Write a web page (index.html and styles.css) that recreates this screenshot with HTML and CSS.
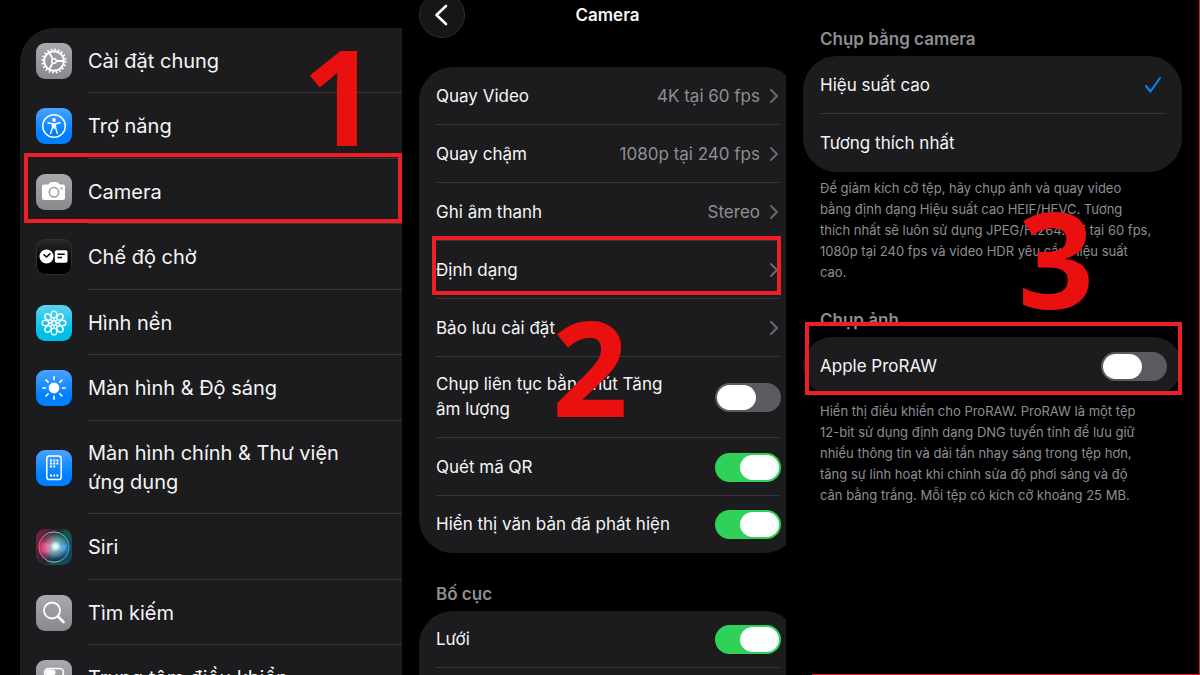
FILE: index.html
```html
<!DOCTYPE html>
<html lang="vi">
<head>
<meta charset="utf-8">
<meta name="viewport" content="width=device-width, initial-scale=1">
<title>Camera</title>
<link rel="stylesheet" href="styles.css">
</head>
<body>
<main class="steps">
  <section class="step step-menu">
    <ul class="menu">
      <li><a class="menu-row" href="#general">
        <svg class="tile gray" viewBox="0 0 36 36" aria-hidden="true">
          <g fill="none" stroke="#fff">
            <circle cx="18" cy="18" r="9.8" stroke-width="1.9"/>
            <circle cx="18" cy="18" r="11.6" stroke-width="2" stroke-dasharray="1.65 1.994"/>
            <circle cx="18" cy="18" r="2.3" stroke-width="1.5"/>
            <path d="M20.300 18H27.500M16.850 16L13.200 9.700M16.850 20L13.200 26.300" stroke-width="1.8"/>
          </g>
        </svg>
        <span>Cài đặt chung</span></a></li>
      <li><a class="menu-row" href="#accessibility">
        <svg class="tile blue" viewBox="0 0 36 36" aria-hidden="true">
          <circle cx="18" cy="18" r="11.300" fill="none" stroke="#fff" stroke-width="1.5"/>
          <circle cx="18" cy="12" r="1.900" fill="#fff"/>
          <path d="M12 14.800L16.500 15.900V19.500L14.600 25.500M24 14.800L19.500 15.900V19.500L21.400 25.500" fill="none" stroke="#fff" stroke-width="1.400" stroke-linecap="round" stroke-linejoin="round"/>
          <path d="M16 15.200H20V20.500H16Z" fill="#fff"/>
        </svg>
        <span>Trợ năng</span></a></li>
      <li class="marked"><a class="menu-row" href="#camera">
        <svg class="tile gray" viewBox="0 0 36 36" aria-hidden="true">
          <path d="M8 10.500H12.200L14 8.600Q14.500 8 15.500 8H20.500Q21.500 8 22 8.600L23.800 10.500H27Q29 10.500 29 12.500V24Q29 26 27 26H8Q6 26 6 24V12.500Q6 10.500 8 10.500Z" fill="#fff"/>
          <circle cx="18" cy="18.300" r="4.700" fill="none" stroke="#98989d" stroke-width="1.500"/>
          <circle cx="25.600" cy="14.400" r="1.100" fill="#98989d"/>
        </svg>
        <span>Camera</span></a></li>
      <li><a class="menu-row" href="#standby">
        <svg class="tile black" viewBox="0 0 36 36" aria-hidden="true">
          <circle cx="10.500" cy="17.500" r="7" fill="#fff"/>
          <path d="M7.500 15.300L10.500 18L14.500 14.300" fill="none" stroke="#000" stroke-width="1.500"/>
          <rect x="18.800" y="11.300" width="12.700" height="12.400" rx="1.800" fill="#fff"/>
          <path d="M21.500 15.200H28.700M21.500 18.500H26" stroke="#000" stroke-width="1.400"/>
        </svg>
        <span>Chế độ chờ</span></a></li>
      <li><a class="menu-row" href="#wallpaper">
        <svg class="tile cyan" viewBox="0 0 36 36" aria-hidden="true">
          <g fill="none" stroke="#fff" stroke-width="1.400">
            <ellipse cx="18" cy="9.500" rx="2.800" ry="3.400"/>
            <ellipse cx="18" cy="9.500" rx="2.800" ry="3.400" transform="rotate(45 18 18)"/>
            <ellipse cx="18" cy="9.500" rx="2.800" ry="3.400" transform="rotate(90 18 18)"/>
            <ellipse cx="18" cy="9.500" rx="2.800" ry="3.400" transform="rotate(135 18 18)"/>
            <ellipse cx="18" cy="9.500" rx="2.800" ry="3.400" transform="rotate(180 18 18)"/>
            <ellipse cx="18" cy="9.500" rx="2.800" ry="3.400" transform="rotate(225 18 18)"/>
            <ellipse cx="18" cy="9.500" rx="2.800" ry="3.400" transform="rotate(270 18 18)"/>
            <ellipse cx="18" cy="9.500" rx="2.800" ry="3.400" transform="rotate(315 18 18)"/>
            <circle cx="18" cy="18" r="2.200"/>
            <path d="M18 13V15.800M18 20.200V23M13 18H15.800M20.200 18H23M14.500 14.500L16.400 16.400M19.600 19.600L21.500 21.500M21.500 14.500L19.600 16.400M16.400 19.600L14.500 21.500"/>
          </g>
        </svg>
        <span>Hình nền</span></a></li>
      <li><a class="menu-row" href="#display">
        <svg class="tile blue" viewBox="0 0 36 36" aria-hidden="true">
          <circle cx="18" cy="18" r="5.400" fill="#fff"/>
          <path d="M18 6.800V9.600M18 26.400V29.200M6.800 18H9.600M26.400 18H29.200M10.100 10.100L12.100 12.100M23.900 23.900L25.900 25.900M25.900 10.100L23.900 12.100M12.100 23.900L10.100 25.900" stroke="#fff" stroke-width="1.600" stroke-linecap="round"/>
        </svg>
        <span>Màn hình &amp; Độ sáng</span></a></li>
      <li><a class="menu-row" href="#home">
        <svg class="tile blue" viewBox="0 0 36 36" aria-hidden="true">
          <rect x="10.800" y="6" width="14.400" height="23.600" rx="2.600" fill="none" stroke="#fff" stroke-width="1.500"/>
          <path d="M14 10.500H22.500M14 13.500H22.500M14 16.500H19.500M14 25.500H22.500" stroke="#fff" stroke-width="2" stroke-dasharray="2 1.200"/>
        </svg>
        <span>Màn hình chính &amp; Thư viện ứng dụng</span></a></li>
      <li><a class="menu-row" href="#siri">
        <svg class="tile siri" viewBox="0 0 36 36" aria-hidden="true">
          <defs>
            <radialGradient id="glow" cx="0.550" cy="0.480" r="0.400">
              <stop offset="0" stop-color="#fff"/>
              <stop offset="0.200" stop-color="#e2faff" stop-opacity="0.900"/>
              <stop offset="0.500" stop-color="#b6dce8" stop-opacity="0.350"/>
              <stop offset="1" stop-color="#fff" stop-opacity="0"/>
            </radialGradient>
            <linearGradient id="orb" x1="0" y1="0.300" x2="1" y2="0.600">
              <stop offset="0" stop-color="#b8285e"/>
              <stop offset="0.300" stop-color="#d84b7d"/>
              <stop offset="0.550" stop-color="#53a7a6"/>
              <stop offset="1" stop-color="#1769a8"/>
            </linearGradient>
            <linearGradient id="shade" x1="0" y1="0" x2="0" y2="1">
              <stop offset="0" stop-color="#12372f" stop-opacity="0.850"/>
              <stop offset="0.450" stop-color="#12372f" stop-opacity="0"/>
              <stop offset="0.600" stop-color="#101a3d" stop-opacity="0"/>
              <stop offset="1" stop-color="#0b173e" stop-opacity="0.900"/>
            </linearGradient>
            <linearGradient id="rim" x1="0" y1="0.500" x2="1" y2="0.500">
              <stop offset="0" stop-color="#e35f8f"/>
              <stop offset="0.500" stop-color="#8dc9ba"/>
              <stop offset="1" stop-color="#38a5c4"/>
            </linearGradient>
          </defs>
          <circle cx="18" cy="18" r="15" fill="url(#orb)"/>
          <circle cx="18" cy="18" r="15" fill="url(#shade)"/>
          <path d="M5 14Q12 13 18 18Q25 18 31 15Q29 22 20 20Q13 26 6 23Z" fill="#e9699c" opacity="0.350"/>
          <path d="M18 18Q25 15 31 16Q30 23 25 22Z" fill="#2b9dec" opacity="0.700"/>
          <circle cx="18" cy="18" r="15" fill="url(#glow)"/>
          <circle cx="18" cy="18" r="15.200" fill="none" stroke="url(#rim)" stroke-width="1"/>
        </svg>
        <span>Siri</span></a></li>
      <li><a class="menu-row" href="#search">
        <svg class="tile gray" viewBox="0 0 36 36" aria-hidden="true">
          <circle cx="16" cy="15.500" r="8" fill="none" stroke="#fff" stroke-width="1.800"/>
          <path d="M22 21.500L27.500 27" stroke="#fff" stroke-width="2.600" stroke-linecap="round"/>
        </svg>
        <span>Tìm kiếm</span></a></li>
      <li><a class="menu-row" href="#control-center">
        <svg class="tile gray" viewBox="0 0 36 36" aria-hidden="true">
          <rect x="8.500" y="8.500" width="19" height="8" rx="4" fill="none" stroke="#fff" stroke-width="1.600"/>
          <rect x="9.500" y="9.500" width="10" height="6" rx="3" fill="#fff"/>
          <rect x="7.700" y="19.500" width="20.600" height="9.500" rx="4.700" fill="#fff"/>
          <circle cx="23.500" cy="24.200" r="3.200" fill="#98989d"/>
        </svg>
        <span>Trung tâm điều khiển</span></a></li>
    </ul>
    <strong class="number number-one">1</strong>
  </section>

  <section class="step step-camera">
    <header class="bar">
      <button class="back" type="button" aria-label="Quay lại">
        <svg viewBox="0 0 20 24" aria-hidden="true"><path d="M14 3L4.500 12L14 21" fill="none" stroke="#fff" stroke-width="2.600" stroke-linecap="round" stroke-linejoin="round"/></svg>
      </button>
      <h1>Camera</h1>
    </header>
    <div class="card">
      <a class="row" href="#video"><span>Quay Video</span><span class="value">4K tại 60 fps</span><svg class="chevron" viewBox="0 0 8 14" aria-hidden="true"><path d="M1 1L7 7L1 13"/></svg></a>
      <a class="row" href="#slow"><span>Quay chậm</span><span class="value">1080p tại 240 fps</span><svg class="chevron" viewBox="0 0 8 14" aria-hidden="true"><path d="M1 1L7 7L1 13"/></svg></a>
      <a class="row" href="#sound"><span>Ghi âm thanh</span><span class="value">Stereo</span><svg class="chevron" viewBox="0 0 8 14" aria-hidden="true"><path d="M1 1L7 7L1 13"/></svg></a>
      <a class="row marked" href="#formats"><span>Định dạng</span><svg class="chevron" viewBox="0 0 8 14" aria-hidden="true"><path d="M1 1L7 7L1 13"/></svg></a>
      <a class="row" href="#preserve"><span>Bảo lưu cài đặt</span><svg class="chevron" viewBox="0 0 8 14" aria-hidden="true"><path d="M1 1L7 7L1 13"/></svg></a>
      <label class="row"><span class="narrow">Chụp liên tục bằng nút Tăng âm lượng</span><input class="switch" type="checkbox"></label>
      <label class="row"><span>Quét mã QR</span><input class="switch" type="checkbox" checked></label>
      <label class="row"><span>Hiển thị văn bản đã phát hiện</span><input class="switch" type="checkbox" checked></label>
    </div>
    <h2>Bố cục</h2>
    <div class="card card-open">
      <label class="row"><span>Lưới</span><input class="switch" type="checkbox" checked></label>
    </div>
    <strong class="number number-two">2</strong>
  </section>

  <section class="step step-formats">
    <h2>Chụp bằng camera</h2>
    <div class="card">
      <label class="row"><span>Hiệu suất cao</span><input class="choice" type="radio" name="capture" checked><svg class="tick" viewBox="0 0 18 18" aria-hidden="true"><path d="M2 10L6.500 15.500L16 2"/></svg></label>
      <label class="row"><span>Tương thích nhất</span><input class="choice" type="radio" name="capture"><svg class="tick" viewBox="0 0 18 18" aria-hidden="true"><path d="M2 10L6.500 15.500L16 2"/></svg></label>
    </div>
    <p>Để giảm kích cỡ tệp, hãy chụp ảnh và quay video bằng định dạng Hiệu suất cao HEIF/HEVC. Tương thích nhất sẽ luôn sử dụng JPEG/H.264. 4K tại 60 fps, 1080p tại 240 fps và video HDR yêu cầu Hiệu suất cao.</p>
    <h2>Chụp ảnh</h2>
    <div class="card marked">
      <label class="row"><span>Apple ProRAW</span><input class="switch" type="checkbox"></label>
    </div>
    <p>Hiển thị điều khiển cho ProRAW. ProRAW là một tệp 12-bit sử dụng định dạng DNG tuyến tính để lưu giữ nhiều thông tin và dải tần nhạy sáng trong tệp hơn, tăng sự linh hoạt khi chỉnh sửa độ phơi sáng và độ cân bằng trắng. Mỗi tệp có kích cỡ khoảng 25 MB.</p>
    <strong class="number number-three">3</strong>
  </section>
</main>
</body>
</html>
```
FILE: styles.css
```css
* { box-sizing: border-box; }

body {
  margin: 0;
  background: #000;
  color: #f5f5f7;
  font-family: Inter, "Noto Sans", sans-serif;
  font-size: 17px;
  line-height: 25px;
}

a { color: inherit; text-decoration: none; }

.steps {
  display: grid;
  grid-template-columns: 402fr 384fr 414fr;
  height: 100vh;
  overflow: hidden;
}

.step { position: relative; min-width: 0; overflow: hidden; }
.step-menu { padding: 28px 0 0 20px; }
.step-camera { padding-left: 17px; }
.step-formats { padding: 27px 17px 0; border-right: 1px solid #e01b22; }
.step-formats::after {
  content: "";
  position: absolute;
  left: 26px;
  right: 0;
  bottom: 0;
  height: 1px;
  background: #e01b22;
}

/* Settings menu */
.menu {
  margin: 0;
  padding: 0;
  list-style: none;
  background: #1c1c1e;
  border-top-left-radius: 34px;
  font-size: 20px;
  line-height: 29px;
}
.menu li { position: relative; }
.menu-row {
  display: flex;
  align-items: center;
  gap: 16px;
  min-height: 65px;
  padding: 0 56px 0 16px;
  position: relative;
}
.menu-row span { padding: 18px 0 17px; }
.menu li:nth-child(even) .menu-row { min-height: 66px; }
.menu-row::after {
  content: "";
  position: absolute;
  left: 68px;
  right: 0;
  bottom: 0;
  height: 1px;
  background: #38383a;
}

.tile { flex: none; width: 36px; height: 36px; border-radius: 9px; }
.gray { background: linear-gradient(#a9a9ae, #88888d); }
.blue { background: linear-gradient(#4aa3ff, #0080ff 70%); }
.cyan { background: linear-gradient(#5ad4f2, #00bfe6 75%); }
.black { background: linear-gradient(#2a2a2c, #000 65%); box-shadow: inset 0 0 0 1px #303032; }
.siri { background: linear-gradient(115deg, #8e1f45, #26232d 45%, #145844 60%, #143d68); }

/* Grouped cards */
.bar {
  display: grid;
  grid-template-columns: 46px 1fr 46px;
  grid-template-rows: 30px;
  align-items: center;
  margin-right: -10px;
  padding-bottom: 37px;
}
.bar h1 { margin: 0; font-size: 17px; font-weight: 600; line-height: 25px; text-align: center; }
.back {
  display: grid;
  place-items: center;
  width: 46px;
  height: 46px;
  padding: 0;
  border: 1px solid #2e2e30;
  border-radius: 50%;
  background: #161617;
}
.back svg { width: 20px; height: 24px; }

.card { border-radius: 34px; background: #1c1c1e; }
.step-camera .card { margin-right: -12px; }
.card-open { padding-bottom: 40px; }

.row {
  position: relative;
  display: flex;
  align-items: center;
  gap: 10px;
  min-height: 58px;
  padding: 14px 17px;
}
.step-camera .row:last-child { min-height: 57px; }
.row > :first-child { flex: 1; }
.row > .narrow { max-width: 240px; padding: 1px 0 2px; }
.row:not(:last-child)::after,
.card-open .row::after {
  content: "";
  position: absolute;
  left: 17px;
  right: 19px;
  bottom: 0;
  height: 1px;
  background: #38383a;
}
.step-formats .row { padding-right: 15px; }
.step-formats .row::after { right: 17px; }
.value { color: #8e8e93; }
.chevron { width: 8px; height: 14px; margin-right: 3px; fill: none; stroke: #68686d; stroke-width: 2; stroke-linecap: round; stroke-linejoin: round; }

.switch {
  flex: none;
  appearance: none;
  width: 66px;
  height: 29px;
  margin: 0 0 0 auto;
  padding: 2px;
  border-radius: 15px;
  background: #5a5a5f;
}
.switch::before {
  content: "";
  display: block;
  width: 39px;
  height: 25px;
  border-radius: 13px;
  background: #fff;
}
.switch:checked { background: #30d158; }
.switch:checked::before { margin-left: auto; }

.choice { appearance: none; margin: 0; }
.tick { width: 18px; height: 18px; margin-right: 5px; fill: none; stroke: #0a84ff; stroke-width: 2; stroke-linecap: round; stroke-linejoin: round; visibility: hidden; }
.choice:checked + .tick { visibility: visible; }

h2 { margin: 0; padding: 0 17px 4px; color: #8e8e93; font-size: 17px; font-weight: 600; line-height: 25px; }
.step-camera h2 { padding-top: 29px; }
p { margin: 0; padding: 6px 30px 25px 17px; color: #8e8e93; font-size: 13px; line-height: 21px; }

/* Red annotations */
.marked::before {
  content: "";
  position: absolute;
  z-index: 1;
  border: 4px solid #ec2024;
}
.menu .marked::before { inset: -6px 0 1px 4px; }
.row.marked::before { inset: -5px 17px 4px 13px; }
.card.marked { position: relative; }
.card.marked::before { inset: -15px 0 0 2px; }

.number {
  position: absolute;
  z-index: 2;
  color: #e9100f;
  font-family: "Open Sans", "Noto Sans", sans-serif;
  font-size: 133px;
  font-weight: 700;
  line-height: 133px;
}
.number-one { top: 28px; left: 302px; }
.number-two { top: 299px; left: 150px; }
.number-three { top: 191px; left: 232px; }
```
